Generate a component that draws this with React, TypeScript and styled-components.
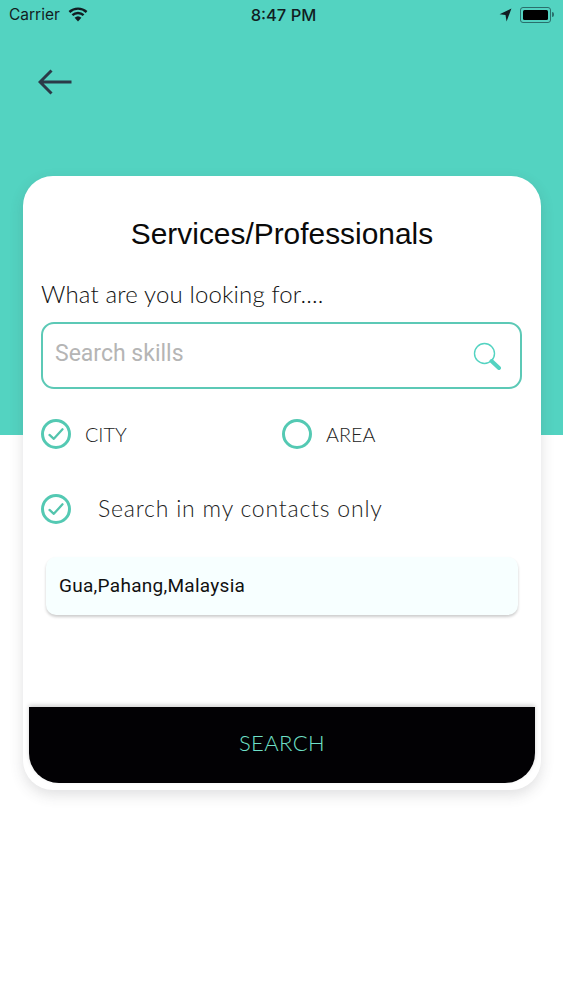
import React from "react";
import styled, { createGlobalStyle } from "styled-components";

const TEAL = "#53d3c1";

const GlobalStyle = createGlobalStyle`
  html, body {
    margin: 0;
    padding: 0;
    background: #ffffff;
  }
  * {
    box-sizing: border-box;
  }
`;

const Check = ({ checked }: { checked?: boolean }) => (
  <StyledCheck>
    {checked && (
      <svg width="16" height="13" viewBox="0 0 18 15" fill="none">
        <path d="M1.5 8 L6.5 12.5 L16.5 1.5" stroke="#53c4ad" strokeWidth="2.6" strokeLinecap="round" strokeLinejoin="round" />
      </svg>
    )}
  </StyledCheck>
);

const App = () => {
  return (
    <StyledPage>
      <GlobalStyle />
      <StyledStatusBar>
        <StyledCarrier>
          Carrier
          <svg width="20" height="15" viewBox="0 0 20 15">
            <path d="M10 14.5 L6.6 10.8 A5 5 0 0 1 13.4 10.8 Z" fill="#111d22" />
            <path d="M4.4 8.2 A8.2 8.2 0 0 1 15.6 8.2" fill="none" stroke="#111d22" strokeWidth="2.4" />
            <path d="M1.4 5 A12.6 12.6 0 0 1 18.6 5" fill="none" stroke="#111d22" strokeWidth="2.4" />
          </svg>
        </StyledCarrier>
        <StyledClock>8:47 PM</StyledClock>
        <StyledStatusRight>
          <svg width="13" height="14" viewBox="0 0 12 13">
            <path d="M11.5 0.5 L0.5 5.8 L6 6.6 L7 12.5 Z" fill="#111d22" />
          </svg>
          <StyledBattery>
            <StyledBatteryFill />
          </StyledBattery>
          <StyledBatteryCap />
        </StyledStatusRight>
      </StyledStatusBar>

      <StyledHeader>
        <svg width="34" height="26" viewBox="0 0 34 26" fill="none">
          <path d="M33.5 13 H2 M13.5 1.5 L2 13 L13.5 24.5" stroke="#2b3a48" strokeWidth="3" />
        </svg>
      </StyledHeader>

      <StyledCard>
        <StyledTitle>Services/Professionals</StyledTitle>
        <StyledPrompt>What are you looking for....</StyledPrompt>
        <StyledSearchBox>
          <StyledPlaceholder>Search skills</StyledPlaceholder>
          <svg width="28" height="28" viewBox="0 0 28 28" fill="none">
            <circle cx="11.5" cy="11.5" r="10" stroke={TEAL} strokeWidth="1.4" />
            <path d="M18.5 19 L26 26" stroke={TEAL} strokeWidth="4" strokeLinecap="round" />
          </svg>
        </StyledSearchBox>

        <StyledOptionRow>
          <StyledOption>
            <Check checked />
            <StyledOptionLabel>CITY</StyledOptionLabel>
          </StyledOption>
          <StyledOption>
            <Check />
            <StyledOptionLabel>AREA</StyledOptionLabel>
          </StyledOption>
        </StyledOptionRow>

        <StyledContacts>
          <Check checked />
          <StyledContactsLabel>Search in my contacts only</StyledContactsLabel>
        </StyledContacts>

        <StyledLocation>Gua,Pahang,Malaysia</StyledLocation>

        <StyledButton>SEARCH</StyledButton>
      </StyledCard>
    </StyledPage>
  );
};

const StyledPage = styled.div`
  width: 563px;
  height: 1000px;
  overflow: hidden;
  background: linear-gradient(to bottom, ${TEAL} 0, ${TEAL} 435px, #ffffff 435px);
  font-family: "Liberation Sans", Arial, sans-serif;
`;

const StyledStatusBar = styled.div`
  display: grid;
  grid-template-columns: 1fr auto 1fr;
  align-items: center;
  height: 29px;
  padding: 0 9px 0 9px;
  color: #111d22;
  font-family: Inter, "Liberation Sans", sans-serif;
  font-size: 15.5px;
`;

const StyledCarrier = styled.div`
  display: flex;
  align-items: center;
  gap: 8px;
`;

const StyledClock = styled.div`
  margin-left: 4px;
  font-weight: 500;
  font-size: 16.5px;
`;

const StyledStatusRight = styled.div`
  display: flex;
  align-items: center;
  justify-content: flex-end;
`;

const StyledBattery = styled.div`
  width: 31px;
  height: 16px;
  margin-left: 8px;
  padding: 2px;
  border: 1px solid #2a6f6c;
  border-radius: 3px;
`;

const StyledBatteryFill = styled.div`
  width: 100%;
  height: 100%;
  background: #000000;
  border-radius: 1.5px;
`;

const StyledBatteryCap = styled.div`
  width: 2px;
  height: 5px;
  margin-left: 1px;
  background: #2a6f6c;
  border-radius: 0 2px 2px 0;
`;

const StyledHeader = styled.div`
  display: flex;
  align-items: center;
  height: 147px;
  padding: 0 0 41px 38px;
`;

const StyledCard = styled.div`
  display: flex;
  flex-direction: column;
  width: 518px;
  height: 614px;
  margin-left: 23px;
  padding: 0 6px 7px;
  background: #ffffff;
  border-radius: 30px;
  box-shadow: 0 5px 14px rgba(60, 60, 70, 0.16);
`;

const StyledTitle = styled.div`
  margin-top: 40px;
  height: 36px;
  line-height: 36px;
  text-align: center;
  font-size: 29.9px;
  color: #0a0a0a;
`;

const StyledPrompt = styled.div`
  margin: 28px 0 0 12px;
  height: 28px;
  line-height: 28px;
  font-family: Lato, sans-serif;
  font-size: 24px;
  font-weight: 300;
  letter-spacing: 0.15px;
  color: #111111;
`;

const StyledSearchBox = styled.div`
  display: flex;
  align-items: center;
  justify-content: space-between;
  height: 67px;
  margin: 14px 13px 0 12px;
  padding: 0 19px 0 12px;
  border: 2px solid #5cc9b6;
  border-radius: 13px;
`;

const StyledPlaceholder = styled.div`
  font-family: Roboto, "Liberation Sans", sans-serif;
  font-size: 23px;
  color: #b5b5b5;
  margin-bottom: 5px;
`;

const StyledOptionRow = styled.div`
  display: grid;
  grid-template-columns: 241px 1fr;
  margin: 29px 0 0 12px;
`;

const StyledOption = styled.div`
  display: flex;
  align-items: center;
  gap: 14px;
  height: 32px;
`;

const StyledCheck = styled.div`
  display: flex;
  align-items: center;
  justify-content: center;
  width: 30px;
  height: 30px;
  flex-shrink: 0;
  border: 3px solid #54c9b3;
  border-radius: 50%;
`;

const StyledOptionLabel = styled.span`
  font-family: Lato, sans-serif;
  font-size: 19.8px;
  font-weight: 300;
  color: #222222;
  margin-bottom: 1px;
`;

const StyledContacts = styled.div`
  display: flex;
  align-items: center;
  gap: 27px;
  height: 32px;
  margin: 43px 0 0 12px;
`;

const StyledContactsLabel = styled.span`
  font-family: Lato, sans-serif;
  font-size: 23px;
  font-weight: 300;
  letter-spacing: 0.8px;
  color: #222222;
  margin-bottom: 2px;
`;

const StyledLocation = styled.div`
  display: flex;
  align-items: center;
  height: 58px;
  margin: 32px 17px 0 17px;
  padding: 0 0 1px 13px;
  background: #f7ffff;
  border-radius: 10px;
  box-shadow: 0 2px 3px rgba(0, 0, 0, 0.2);
  font-family: Roboto, "Liberation Sans", sans-serif;
  font-size: 19px;
  letter-spacing: 0.28px;
  color: #111111;
`;

const StyledButton = styled.div`
  display: flex;
  align-items: center;
  justify-content: center;
  height: 76px;
  margin-top: auto;
  padding-bottom: 5px;
  background: #020104;
  border-radius: 0 0 30px 30px;
  box-shadow: 0 -2px 4px rgba(0, 0, 0, 0.18);
  font-family: Lato, sans-serif;
  font-size: 22px;
  font-weight: 300;
  letter-spacing: 0.4px;
  color: #6fe0c8;
`;

export default App;
